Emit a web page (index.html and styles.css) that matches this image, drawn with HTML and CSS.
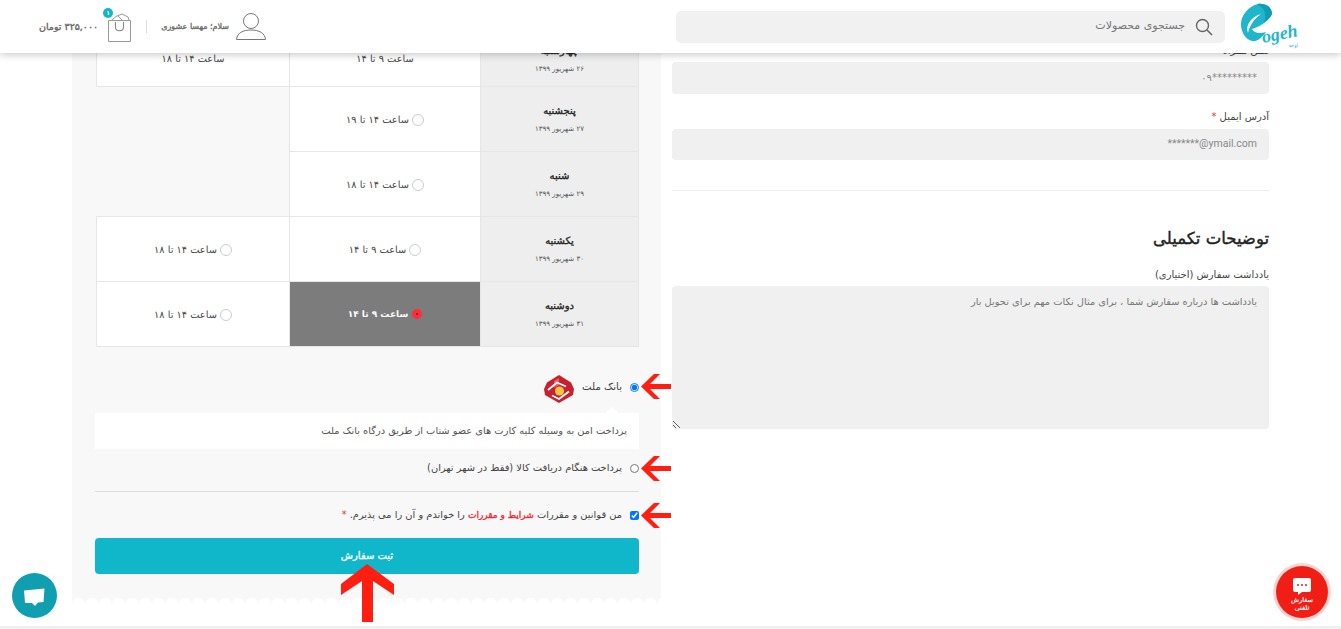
FILE: index.html
```html
<!DOCTYPE html>
<html lang="fa" dir="rtl">
<head>
<meta charset="utf-8">
<title>ثبت سفارش</title>
<link rel="stylesheet" href="styles.css">
</head>
<body>
<header class="topbar">
  <div class="brand">
    <svg class="logo" viewBox="0 0 58 50" width="58" height="50">
      <path fill="#1fb6cb" d="M18 2C26 1 32 5 32 12C29 19 21 24 12 27C14 31 19 32 26 30C21 37 16 40 12 39C5 37 1 30 1 22C1 13 9 4 18 2Z"/>
      <path fill="#0e9db3" d="M17 2C25 1 32 5 32 12C30 16 27 18 24 20C27 13 25 6 17 2Z"/>
      <path fill="#fff" d="M8 31C5 23 11 15 21 12C14 17 10 23 8 31Z"/>
      <text class="logo-word" x="23" y="41" transform="rotate(-11 23 41)">ogeh</text>
      <text class="logo-small" x="58" y="45">اوجه</text>
    </svg>
  </div>
  <div class="search">
    <svg class="search-icon" viewBox="0 0 18 18" width="18" height="18"><circle cx="7.500" cy="7.500" r="6" fill="none" stroke="#666" stroke-width="1.400"/><path d="M12 12l5 5" stroke="#666" stroke-width="1.600" fill="none"/></svg>
    <span class="search-text">جستجوی محصولات</span>
  </div>
  <div class="account">
    <svg viewBox="0 0 30 28" width="30" height="28"><circle cx="15" cy="8" r="7.500" fill="none" stroke="#777"/><path d="M.5 26.500C1 20 7 17 15 17S29 20 29.500 26.500Z" fill="none" stroke="#777"/></svg>
    <span class="hello">سلام؛ مهسا عشوری</span>
    <span class="sep"></span>
    <span class="cart">
      <svg viewBox="0 0 23 30" width="23" height="30"><path d="M.5 8.500H22.500V29.500H.5Z" fill="none" stroke="#999"/><path d="M4 8L8 4.500L14 2L20 5L21 8M10 4L14 8" fill="none" stroke="#999"/><path d="M7.500 10V15C7.500 20 15.500 20 15.500 15V10" fill="none" stroke="#888" stroke-width="1.100"/></svg>
      <b class="badge">۱</b>
    </span>
    <span class="price">۳۲۵,۰۰۰ تومان</span>
  </div>
</header>

<main class="columns">
  <section class="details">
    <label class="field-label">تلفن همراه</label>
    <input class="field" readonly value="*********۰۹">
    <label class="field-label second">آدرس ایمیل <em>*</em></label>
    <input class="field latin" dir="ltr" readonly value="*******@ymail.com">
    <hr class="rule">
    <h2 class="extra-title">توضیحات تکمیلی</h2>
    <label class="field-label note-label">یادداشت سفارش (اختیاری)</label>
    <textarea class="note" placeholder="یادداشت ها درباره سفارش شما ، برای مثال نکات مهم برای تحویل بار"></textarea>
  </section>

  <section class="order">
    <table class="slots">
      <colgroup><col class="c-day"><col class="c-mid"><col class="c-end"></colgroup>
      <tr class="short">
        <th><b>چهارشنبه</b><small>۲۶ شهریور ۱۳۹۹</small></th>
        <td>ساعت ۹ تا ۱۴</td>
        <td>ساعت ۱۴ تا ۱۸</td>
      </tr>
      <tr>
        <th><b>پنجشنبه</b><small>۲۷ شهریور ۱۳۹۹</small></th>
        <td><span class="dot"></span>ساعت ۱۴ تا ۱۹</td>
        <td class="none" rowspan="2"></td>
      </tr>
      <tr>
        <th><b>شنبه</b><small>۲۹ شهریور ۱۳۹۹</small></th>
        <td><span class="dot"></span>ساعت ۱۴ تا ۱۸</td>
      </tr>
      <tr>
        <th><b>یکشنبه</b><small>۳۰ شهریور ۱۳۹۹</small></th>
        <td><span class="dot"></span>ساعت ۹ تا ۱۴</td>
        <td><span class="dot"></span>ساعت ۱۴ تا ۱۸</td>
      </tr>
      <tr>
        <th><b>دوشنبه</b><small>۳۱ شهریور ۱۳۹۹</small></th>
        <td class="picked"><span class="dot on"></span>ساعت ۹ تا ۱۴</td>
        <td><span class="dot"></span>ساعت ۱۴ تا ۱۸</td>
      </tr>
    </table>

    <div class="opt bank">
      <input type="radio" name="pay" checked>
      <span>بانک ملت</span>
      <svg class="mellat" viewBox="0 0 30 28" width="30" height="28">
        <path fill="#c9202f" d="M15 0L27 7.500L30 14L29 20L15 28L1 20L0 14L3 7.500Z"/>
        <path fill="#ef5a63" d="M10 6L15 3V10L10 13Z"/>
        <path d="M4 15L13 7.500L22 11.500M8 20.500L15 24L25 16.500" fill="none" stroke="#fff" stroke-width="1.800"/>
        <circle cx="15.500" cy="16" r="4.600" fill="#f6c343"/>
      </svg>
    </div>
    <div class="pay-note">پرداخت امن به وسیله کلیه کارت های عضو شتاب از طریق درگاه بانک ملت</div>
    <div class="opt cod">
      <input type="radio" name="pay">
      <span>پرداخت هنگام دریافت کالا (فقط در شهر تهران)</span>
    </div>
    <hr class="split">
    <div class="opt terms">
      <input type="checkbox" checked>
      <span>من قوانین و مقررات <a>شرایط و مقررات</a> را خواندم و آن را می پذیرم. <em>*</em></span>
    </div>
    <button class="submit" type="button">ثبت سفارش</button>
    <div class="scallop"></div>
  </section>
</main>
<div class="foot"></div>

<svg class="arrow a1" viewBox="0 0 31 26" width="31" height="26"><path d="M0 12.500L13 0H19L9 10H30V15H9L19 25H13Z"/></svg>
<svg class="arrow a2" viewBox="0 0 31 26" width="31" height="26"><path d="M0 12.500L13 0H19L9 10H30V15H9L19 25H13Z"/></svg>
<svg class="arrow a3" viewBox="0 0 31 26" width="31" height="26"><path d="M0 12.500L13 0H19L9 10H30V15H9L19 25H13Z"/></svg>
<svg class="arrow a4" viewBox="0 0 53 58" width="53" height="58"><path d="M26 0L53 20V31L32 17V58H21V17L0 31V20Z"/></svg>

<div class="chat">
  <svg viewBox="0 0 22 19" width="22" height="19"><path fill="#fff" d="M0 2.500L20.500 .5L19.500 14L14 14.500L11 18L8 15L1 15Z"/></svg>
</div>
<div class="phone">
  <svg viewBox="0 0 18 17" width="18" height="17"><path fill="#fff" d="M2 0H16A2 2 0 0 1 18 2V12A2 2 0 0 1 16 14H9L5 17V14H2A2 2 0 0 1 0 12V2A2 2 0 0 1 2 0Z"/><circle cx="5" cy="7" r="1" fill="#f01e14"/><circle cx="9" cy="7" r="1" fill="#f01e14"/><circle cx="13" cy="7" r="1" fill="#f01e14"/></svg>
  <span>سفارش<br>تلفنی</span>
</div>
</body>
</html>
```

FILE: styles.css
```css
* { box-sizing: border-box; }
html, body { margin: 0; height: 629px; overflow: hidden; background: #fff; }
body { font-family: "DejaVu Sans", "Noto Sans", sans-serif; font-size: 9.500px; color: #444; position: relative; }

.topbar { position: absolute; top: 0; left: 0; right: 0; height: 53px; background: #fff; box-shadow: 0 1px 8px rgba(0,0,0,.25); display: flex; align-items: center; padding: 0 43px 0 39px; z-index: 5; }
.brand { width: 73px; height: 50px; flex: none; margin-top: 1px; }
.logo { display: block; overflow: visible; }
.logo-word { font-family: "Liberation Serif", serif; font-style: italic; font-weight: 700; font-size: 18px; fill: #1fb6cb; direction: ltr; }
.logo-small { font-size: 5px; fill: #1fb6cb; }
.search { width: 549px; height: 32px; align-self: flex-start; margin-top: 11px; flex: none; background: #f1f1f1; border-radius: 5px; display: flex; align-items: center; padding-right: 12px; gap: 10px; }
.search-text { font-size: 11px; color: #777; line-height: 14px; margin-top: -2px; }
.search-icon { flex: none; margin-top: 0; }
.account { margin-right: auto; display: flex; align-items: center; }
.hello { font-size: 8px; font-weight: 400; -webkit-text-stroke: .3px #666; color: #666; margin-right: 7px; }
.sep { width: 1px; height: 13px; background: #ddd; margin: 0 14px 0 15px; }
.cart { position: relative; display: block; height: 30px; margin-top: 0; }
.cart svg { display: block; }
.badge { position: absolute; top: -4px; right: 18px; width: 10px; height: 10px; border-radius: 50%; background: #10b7cb; color: #fff; font-size: 6px; line-height: 10px; text-align: center; }
.price { font-size: 9.500px; font-weight: 400; -webkit-text-stroke: .35px #666; color: #666; margin-right: 10px; }

.columns { display: flex; height: 626px; padding: 0 72px; gap: 11px; }
.details { width: 597px; flex: none; padding-top: 41px; }
.field-label { display: block; font-size: 10px; line-height: 20px; height: 21px; color: #444; }
.field-label.second { margin-top: 11px; height: 24px; padding-top: 2px; }
.field-label em { color: #e2401c; font-style: normal; }
.field { display: block; width: 100%; height: 32px; border: 0; border-radius: 4px; background: #f0f0f0; font: 10px "DejaVu Sans", sans-serif; color: #888; padding: 0 12px 2px; outline: none; text-align: right; }
.field.latin { font: 10.500px "Roboto", "Liberation Sans", sans-serif; height: 31px; padding-bottom: 3px; }
.rule { border: 0; border-top: 1px solid #eee; margin: 30px 0 0; }
.extra-title { font-size: 16.500px; line-height: 20px; margin: 38px 0 0; color: #222; font-weight: 400; -webkit-text-stroke: .4px #222; }
.note-label { margin-top: 18px; height: 16px; line-height: 16px; margin-bottom: 3px; }
.note { display: block; width: 100%; height: 143px; border: 0; border-radius: 4px; background: #f0f0f0; font: 9.850px/20px "DejaVu Sans", sans-serif; padding: 6px 12px; outline: none; resize: both; max-width: 100%; color: #777; }
.note::placeholder { color: #777; }

.order { width: 589px; flex: none; height: 604px; background: #f8f8f8; padding: 32px 22px 0 23px; position: relative; display: flex; flex-direction: column; }
.slots { width: 542px; align-self: flex-start; border-collapse: collapse; table-layout: fixed; flex: none; }
.c-day { width: 158px; }
.c-mid { width: 191px; }
.c-end { width: 193px; }
.slots tr { height: 65px; }
.slots tr.short { height: 54px; }
.slots td, .slots th { border: 1px solid #e6e6e6; text-align: center; padding: 1px 0 0; font-weight: 400; background: #fff; vertical-align: middle; font-size: 9.800px; text-rendering: geometricPrecision; }
.slots tr.short td { padding: 0 0 1px; }
.slots th { background: #eee; color: #222; padding: 0; }
.slots th b { display: block; font-size: 10px; font-weight: 400; -webkit-text-stroke: .35px #222; line-height: 15px; }
.slots th small { display: block; font-size: 7px; line-height: 12px; margin-top: 4px; color: #555; }
.slots td.none { background: #f8f8f8; border-left: 0; }
.slots td.picked { background: #7c7c7c; color: #fff; font-weight: 700; font-size: 9px; }
.dot { display: inline-block; width: 12px; height: 12px; border-radius: 50%; border: 1px solid #ccc; background: #fff; margin-left: 3px; vertical-align: -3px; }
.dot.on { width: 10px; height: 10px; background: #ff2d3a; border: 3px solid #ff2d3a; margin-left: 4px; vertical-align: -2px; }
.dot.on::after { content: ""; display: block; width: 2px; height: 2px; border-radius: 50%; background: #7c1a20; margin: 1px; }

.opt { display: flex; align-items: center; font-size: 9.850px; color: #444; line-height: 16px; }
.opt input { width: 9px; height: 9px; margin: 0 0 0 8px; flex: none; }
.bank { margin-top: 28px; height: 28px; font-size: 10.200px; }
.bank input, .bank span { margin-bottom: 4px; }
.mellat { margin-right: 8px; flex: none; }
.pay-note { margin-top: 10px; height: 36px; line-height: 36px; background: #fff; padding-right: 12px; position: relative; color: #555; font-size: 9.850px; }
.pay-note::before { content: ""; position: absolute; top: -6px; right: 21px; border: 6px solid transparent; border-top: 0; border-bottom-color: #fff; }
.cod { margin-top: 11px; height: 16px; }
.split { width: 100%; margin: 15px 0 0; border: 0; border-top: 1px solid #ddd; }
.terms { margin-top: 15px; height: 16px; }
.terms a { color: #f01e2c; font-weight: 400; -webkit-text-stroke: .3px #f01e2c; font-size: 9px; }
.terms em { color: #e2401c; font-style: normal; }
.submit { margin-top: 15px; height: 36px; width: 100%; border: 0; border-radius: 4px; background: #10b7cb; color: #fff; font: 400 10px "DejaVu Sans", sans-serif; -webkit-text-stroke: .35px #fff; padding: 0 0 1px; flex: none; }
.scallop { margin: auto -22px 0 -23px; height: 7px; background: radial-gradient(circle at 50% 100%, #fff 6px, #f8f8f8 6.500px) 0 0 / 13.300px 7px repeat-x; }
.foot { height: 3px; background: #f0f0f0; }

.arrow { position: absolute; fill: #ff1e10; z-index: 3; }
.a1 { left: 641px; top: 374px; }
.a2 { left: 641px; top: 456px; }
.a3 { left: 641px; top: 503px; }
.a4 { left: 341px; top: 564px; }

.chat { position: absolute; left: 12px; top: 573px; width: 45px; height: 45px; border-radius: 50%; background: #0f9fb0; display: flex; align-items: center; justify-content: center; padding-top: 3px; }
.phone { position: absolute; left: 1276px; top: 566px; width: 52px; height: 52px; border-radius: 50%; background: #f01e14; box-shadow: 0 0 0 3px #fcd5d2; color: #fff; display: flex; flex-direction: column; align-items: center; padding-top: 12px; font-size: 6.500px; -webkit-text-stroke: .2px #fff; line-height: 8px; text-align: center; }
.phone svg { display: block; margin-bottom: 1px; flex: none; }
```
